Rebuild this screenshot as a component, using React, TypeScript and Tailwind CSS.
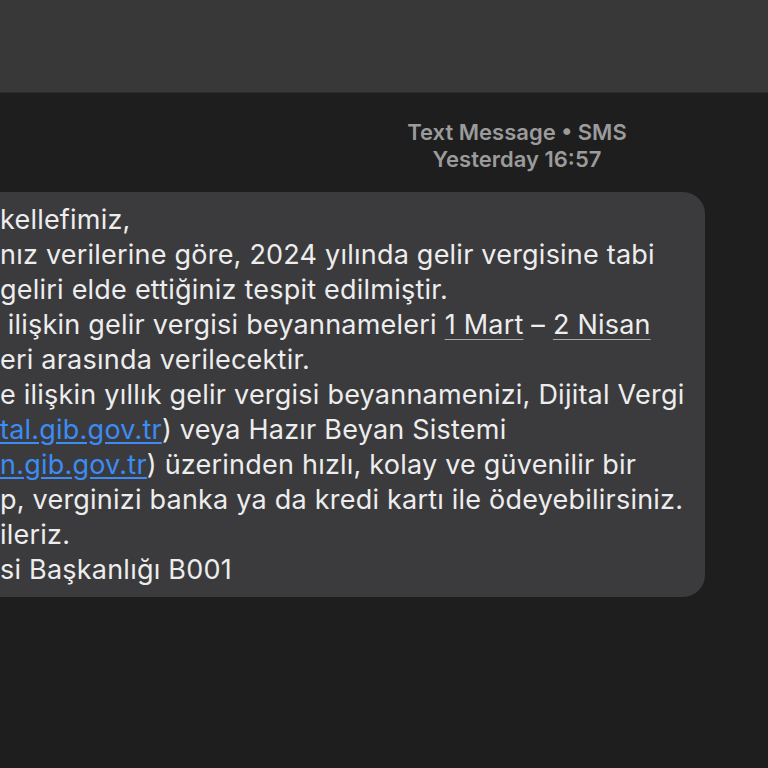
import React from "react";

const Link = ({ children }: { children: React.ReactNode }) => (
  <span className="text-[#3b8cf5] underline decoration-[#3b8cf5] underline-offset-[3px]">{children}</span>
);
const Date = ({ children }: { children: React.ReactNode }) => (
  <span className="underline decoration-[#a8a8a8] decoration-1 underline-offset-[5px]">{children}</span>
);

export default function App() {
  return (
    <div
      className="w-[768px] h-[768px] overflow-hidden bg-[#1e1e1e] flex flex-col"
      style={{ fontFamily: 'Inter, "Noto Sans", sans-serif' }}
    >
      <div className="h-[93px] shrink-0 bg-[#383838] border-b border-[#2a2a2a]" />
      <div className="ml-[317px] w-[400px] mt-[26px] text-center text-[#9b9b9b] text-[22px] font-semibold leading-[27px]">
        <div>Text Message • SMS</div>
        <div>Yesterday 16:57</div>
      </div>
      <div className="mt-[19px] -ml-[20px] w-[725px] h-[405px] bg-[#3b3b3d] rounded-[22px] pl-[20px] pt-[10px] text-[#ededed] text-[27px] tracking-[0.22px] leading-[35px] whitespace-pre">
        <div>kellefimiz,</div>
        <div>nız verilerine göre, 2024 yılında gelir vergisine tabi</div>
        <div>geliri elde ettiğiniz tespit edilmiştir.</div>
        <div> ilişkin gelir vergisi beyannameleri <Date>1 Mart</Date> – <Date>2 Nisan</Date></div>
        <div>eri arasında verilecektir.</div>
        <div>e ilişkin yıllık gelir vergisi beyannamenizi, Dijital Vergi</div>
        <div><Link>tal.gib.gov.tr</Link>) veya Hazır Beyan Sistemi</div>
        <div><Link>n.gib.gov.tr</Link>) üzerinden hızlı, kolay ve güvenilir bir</div>
        <div>p, verginizi banka ya da kredi kartı ile ödeyebilirsiniz.</div>
        <div>ileriz.</div>
        <div>si Başkanlığı B001</div>
      </div>
    </div>
  );
}
